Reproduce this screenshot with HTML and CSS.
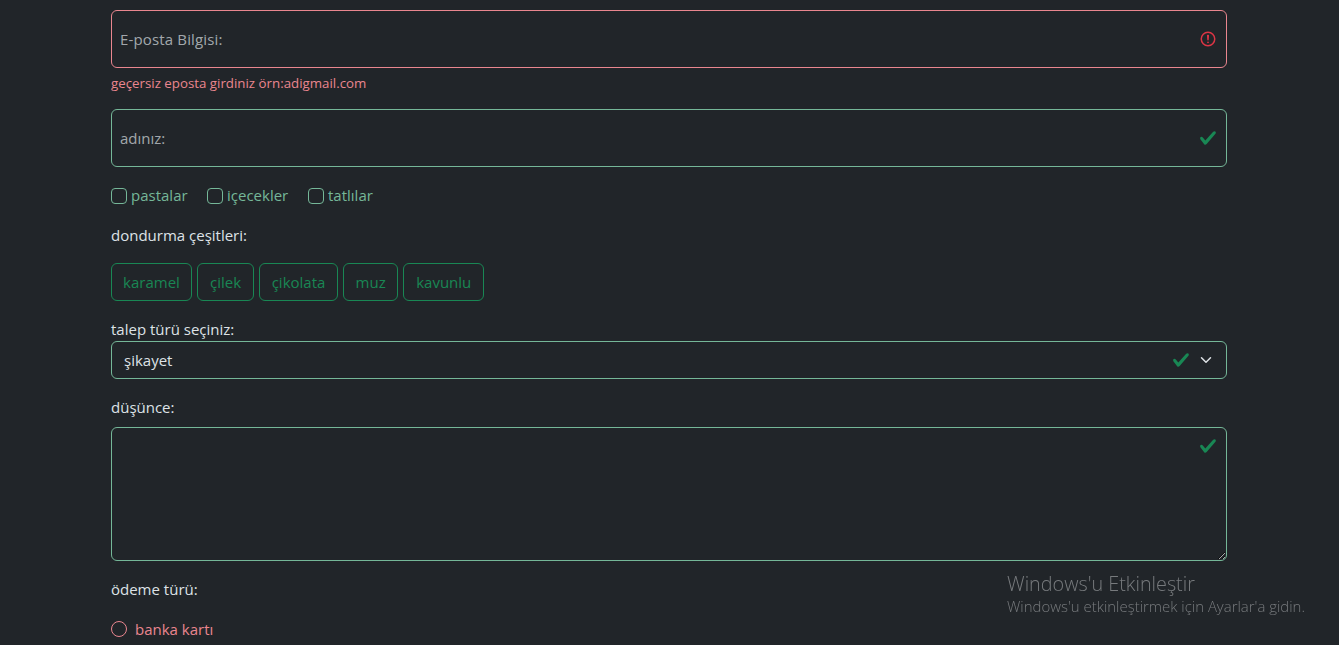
FILE: index.html
```html
<!DOCTYPE html>
<html lang="tr">
<head>
<meta charset="utf-8">
<title>Form</title>
<link rel="stylesheet" href="styles.css">
</head>
<body>
<form class="form">
  <div class="field">
    <div class="floating">
      <input class="control control-float is-invalid" type="text" id="email" aria-label="E-posta Bilgisi">
      <label class="float-label float-wide" for="email">E-posta Bilgisi:</label>
      <svg class="state-icon" viewBox="0 0 12 12" fill="none" stroke="#dc3545"><circle cx="6" cy="6" r="4.5"/><path stroke-linejoin="round" d="M5.8 3.6h.4L6 6.5z"/><circle cx="6" cy="8.2" r=".6" fill="#dc3545" stroke="none"/></svg>
    </div>
    <div class="feedback">geçersiz eposta girdiniz örn:adigmail.com</div>
  </div>
  <div class="floating">
    <input class="control control-float is-valid" type="text" id="name" aria-label="adınız">
    <label class="float-label" for="name">adınız:</label>
    <svg class="state-icon" viewBox="0 0 8 8"><path fill="#198754" d="M2.3 6.73.6 4.53c-.4-1.04.46-1.4 1.1-.8l1.1 1.4 3.4-3.8c.6-.63 1.6-.27 1.2.7l-4 4.6c-.43.5-.8.4-1.1.1z"/></svg>
  </div>
  <div class="checks">
    <label class="check check-a"><span class="box"></span>pastalar</label>
    <label class="check check-b"><span class="box"></span>içecekler</label>
    <label class="check"><span class="box"></span>tatlılar</label>
  </div>
  <div class="label">dondurma çeşitleri:</div>
  <div class="buttons">
    <span class="btn btn-1">karamel</span>
    <span class="btn btn-2">çilek</span>
    <span class="btn btn-3">çikolata</span>
    <span class="btn btn-4">muz</span>
    <span class="btn btn-5">kavunlu</span>
  </div>
  <div class="field">
    <label class="label" for="talep">talep türü seçiniz:</label>
    <div class="floating">
      <select class="control select is-valid" id="talep"><option>şikayet</option></select>
      <svg class="state-icon state-select" viewBox="0 0 8 8"><path fill="#198754" d="M2.3 6.73.6 4.53c-.4-1.04.46-1.4 1.1-.8l1.1 1.4 3.4-3.8c.6-.63 1.6-.27 1.2.7l-4 4.6c-.43.5-.8.4-1.1.1z"/></svg>
      <svg class="chevron" viewBox="0 0 16 16" fill="none" stroke="#dee2e6" stroke-linecap="round" stroke-linejoin="round" stroke-width="2"><path d="m2 5 6 6 6-6"/></svg>
    </div>
  </div>
  <div class="field field-gap">
    <label class="label" for="dusunce">düşünce:</label>
    <div class="floating">
      <textarea class="control area is-valid" id="dusunce"></textarea>
      <svg class="state-icon state-area" viewBox="0 0 8 8"><path fill="#198754" d="M2.3 6.73.6 4.53c-.4-1.04.46-1.4 1.1-.8l1.1 1.4 3.4-3.8c.6-.63 1.6-.27 1.2.7l-4 4.6c-.43.5-.8.4-1.1.1z"/></svg>
    </div>
  </div>
  <div class="label">ödeme türü:</div>
  <label class="radio"><span class="circle"></span>banka kartı</label>
</form>
<aside class="activate">
  <div class="activate-title">Windows'u Etkinleştir</div>
  <div class="activate-sub">Windows'u etkinleştirmek için Ayarlar'a gidin.</div>
</aside>
</body>
</html>
```
FILE: styles.css
```css
* { box-sizing: border-box; }
html, body { height: 100%; overflow: hidden; }
body {
  margin: 0;
  background: #212529;
  color: #dee2e6;
  font-family: "Open Sans", "Noto Sans", sans-serif;
  font-size: 15px;
  line-height: 24px;
}
.form {
  width: 1116px;
  margin-left: 111px;
  padding-top: 10px;
  display: flex;
  flex-direction: column;
  gap: 16px;
}
.field { display: flex; flex-direction: column; }
.field-gap { gap: 8px; }
.floating { position: relative; display: flex; }
.control {
  display: block;
  width: 100%;
  background: #212529;
  color: #dee2e6;
  border: 1px solid #75b798;
  border-radius: 6px;
  font: inherit;
  outline: none;
}
.control-float { height: 58px; padding: 0 8px; }
.is-invalid { border-color: #ea868f; }
.float-label {
  position: absolute;
  left: 9px;
  top: 17px;
  color: rgba(222, 226, 230, .7);
  pointer-events: none;
}
.float-wide { letter-spacing: .15px; }
.state-icon { position: absolute; right: 10px; top: 20px; width: 18px; height: 18px; }
.state-select { right: 37px; top: 10px; }
.state-area { top: 10px; }
.chevron { position: absolute; right: 13px; top: 13px; width: 16px; height: 12px; }
.feedback { margin-top: 5px; height: 20px; line-height: 21px; font-size: 13.3px; color: #ea868f; }
.checks { display: flex; height: 24px; }
.check { display: flex; align-items: center; gap: 4px; color: #75b798; }
.check-a { width: 96px; }
.check-b { width: 101px; }
.box {
  width: 16px; height: 16px;
  border: 1px solid #75b798;
  border-radius: 4px;
  margin-top: 2px;
}
.label { display: block; height: 24px; }
.buttons { display: flex; gap: 5px; }
.btn {
  display: flex;
  align-items: center;
  justify-content: center;
  height: 38px;
  border: 1px solid #198754;
  border-radius: 6px;
  color: #198754;
}
.btn-1 { width: 81px; }
.btn-2 { width: 57px; }
.btn-3 { width: 79px; }
.btn-4 { width: 55.25px; }
.btn-5 { width: 81px; }
.select { height: 38px; padding: 0 12px; appearance: none; -webkit-appearance: none; }
.area { height: 134px; padding: 6px 12px; resize: vertical; }
.radio { display: flex; align-items: center; gap: 8px; color: #ea868f; height: 24px; }
.circle { width: 16px; height: 16px; border: 1px solid #ea868f; border-radius: 50%; }
.activate { position: fixed; left: 1007px; top: 571px; color: #777a7d; pointer-events: none; }
.activate-title { font-size: 19.8px; font-weight: 300; line-height: 26px; }
.activate-sub { font-size: 14.95px; font-weight: 300; line-height: 18px; }
```
